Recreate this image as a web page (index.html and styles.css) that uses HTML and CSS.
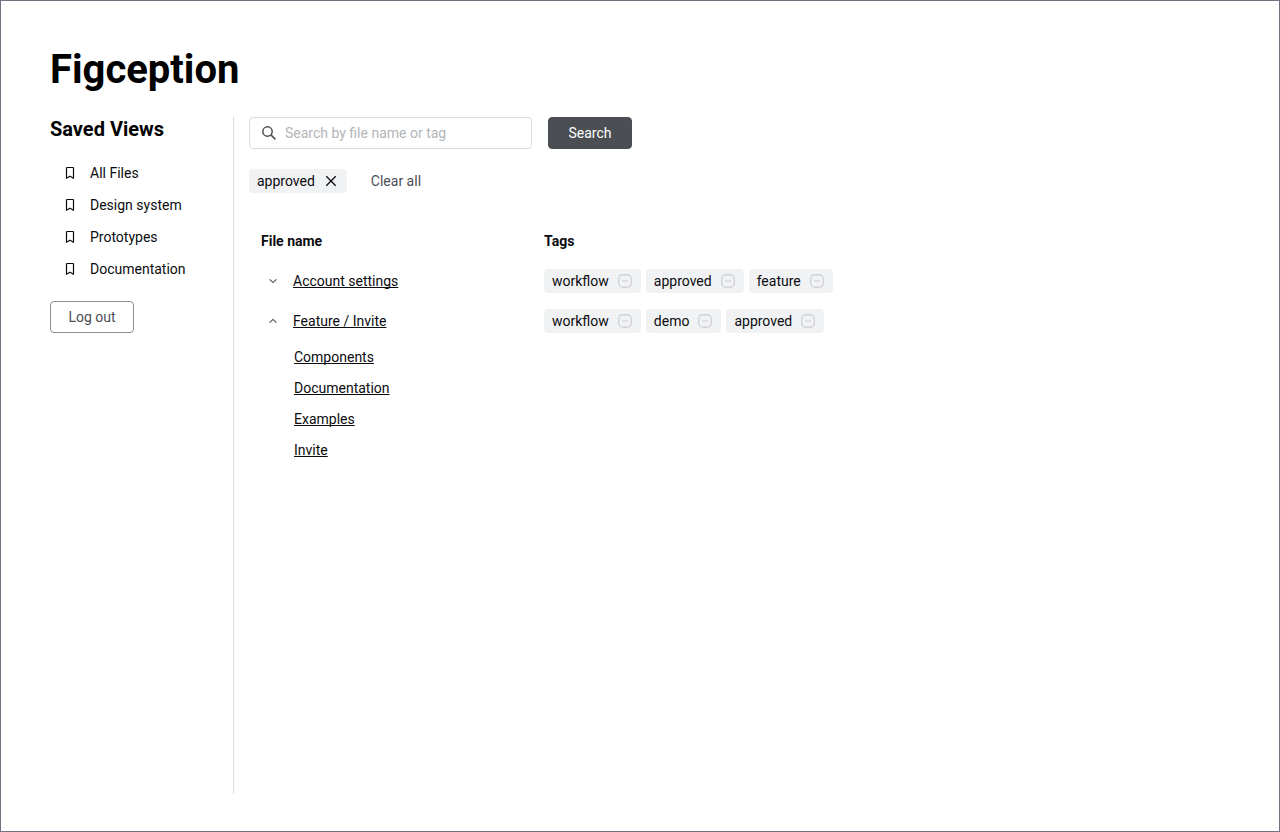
FILE: index.html
```html
<!DOCTYPE html>
<html lang="en">
<head>
  <meta charset="utf-8">
  <meta name="viewport" content="width=device-width, initial-scale=1">
  <title>Figception</title>
  <link rel="stylesheet" href="styles.css">
</head>
<body>
  <svg class="sprite" aria-hidden="true">
    <symbol id="bookmark" viewBox="0 0 16 16">
      <path d="M4.5 3.2q0-.7.7-.7h5.6q.7 0 .7.7v10L8 11.2l-3.5 2z" fill="none" stroke="currentColor" stroke-width="1.2" stroke-linejoin="round"/>
    </symbol>
    <symbol id="remove" viewBox="0 0 16 16">
      <rect x="1.7" y="1.7" width="12.6" height="12.6" rx="4" fill="none" stroke="currentColor" stroke-width="1.4"/>
      <path d="M5 8h6" fill="none" stroke="currentColor" stroke-width="1.2"/>
    </symbol>
  </svg>
  <div class="page">
    <h1 class="title">Figception</h1>
    <div class="layout">
      <aside class="sidebar">
        <h2 class="sidebar-title">Saved Views</h2>
        <nav class="views" aria-label="Saved views">
          <a class="view" href="#all"><svg class="icon"><use href="#bookmark"/></svg>All Files</a>
          <a class="view" href="#design"><svg class="icon"><use href="#bookmark"/></svg>Design system</a>
          <a class="view" href="#prototypes"><svg class="icon"><use href="#bookmark"/></svg>Prototypes</a>
          <a class="view" href="#docs"><svg class="icon"><use href="#bookmark"/></svg>Documentation</a>
        </nav>
        <button class="button" type="button">Log out</button>
      </aside>
      <main class="content">
        <form class="search">
          <label class="search-box">
            <svg class="icon search-icon" viewBox="0 0 16 16" aria-hidden="true">
              <circle cx="6.5" cy="6.5" r="4.7" fill="none" stroke="currentColor" stroke-width="1.5"/>
              <path d="M9.9 9.9l4.5 4.5" fill="none" stroke="currentColor" stroke-width="1.5"/>
            </svg>
            <input class="search-input" type="text" placeholder="Search by file name or tag" aria-label="Search by file name or tag">
          </label>
          <button class="button button-primary" type="submit">Search</button>
        </form>
        <div class="filters">
          <span class="tag">approved
            <button class="tag-button tag-close" type="button" aria-label="Remove approved filter">
              <svg class="icon" viewBox="0 0 16 16"><path d="M3.3 3.3l9.4 9.4M12.7 3.3l-9.4 9.4" fill="none" stroke="currentColor" stroke-width="1.3"/></svg>
            </button>
          </span>
          <button class="clear" type="button">Clear all</button>
        </div>
        <table class="files">
          <thead>
            <tr><th class="name-column" scope="col">File name</th><th scope="col">Tags</th></tr>
          </thead>
          <tbody>
            <tr>
              <td>
                <div class="file">
                  <button class="toggle" type="button" aria-label="Expand Account settings" aria-expanded="false"><svg class="chevron" viewBox="0 0 8 8"><path d="M.6 2.4L4 5.6l3.4-3.2" fill="none" stroke="currentColor" stroke-width="1.1"/></svg></button>
                  <a href="#account">Account settings</a>
                </div>
              </td>
              <td>
                <div class="tags">
                  <span class="tag">workflow <button class="tag-button" type="button" aria-label="Remove workflow"><svg class="icon"><use href="#remove"/></svg></button></span>
                  <span class="tag">approved <button class="tag-button" type="button" aria-label="Remove approved"><svg class="icon"><use href="#remove"/></svg></button></span>
                  <span class="tag">feature <button class="tag-button" type="button" aria-label="Remove feature"><svg class="icon"><use href="#remove"/></svg></button></span>
                </div>
              </td>
            </tr>
            <tr>
              <td>
                <div class="file">
                  <button class="toggle" type="button" aria-label="Collapse Feature / Invite" aria-expanded="true"><svg class="chevron" viewBox="0 0 8 8"><path d="M.6 5.6L4 2.4l3.4 3.2" fill="none" stroke="currentColor" stroke-width="1.1"/></svg></button>
                  <a href="#invite-file">Feature / Invite</a>
                </div>
                <ul class="pages">
                  <li><a href="#components">Components</a></li>
                  <li><a href="#documentation">Documentation</a></li>
                  <li><a href="#examples">Examples</a></li>
                  <li><a href="#invite">Invite</a></li>
                </ul>
              </td>
              <td>
                <div class="tags">
                  <span class="tag">workflow <button class="tag-button" type="button" aria-label="Remove workflow"><svg class="icon"><use href="#remove"/></svg></button></span>
                  <span class="tag">demo <button class="tag-button" type="button" aria-label="Remove demo"><svg class="icon"><use href="#remove"/></svg></button></span>
                  <span class="tag">approved <button class="tag-button" type="button" aria-label="Remove approved"><svg class="icon"><use href="#remove"/></svg></button></span>
                </div>
              </td>
            </tr>
          </tbody>
        </table>
      </main>
    </div>
  </div>
</body>
</html>
```

FILE: styles.css
```css
* { box-sizing: border-box; }

body {
  margin: 0;
  font: 14px/20px Roboto, "Liberation Sans", sans-serif;
  color: #0b0c0f;
  background: #fff;
}

button, input { font: inherit; }
button { cursor: pointer; }
a { color: inherit; }
.sprite { display: none; }
.icon { display: block; flex: none; width: 16px; height: 16px; }

.page {
  display: flex;
  flex-direction: column;
  min-height: 100vh;
  padding: 44px 49px 37px;
  border: 1px solid #6f7480;
}

.title {
  margin: 0 0 22px;
  font-size: 40px;
  line-height: 50px;
  font-weight: 700;
  color: #000;
}

.layout { display: flex; flex: 1; }

.sidebar {
  flex: none;
  width: 184px;
  border-right: 1px solid #dcdcde;
}

.sidebar-title {
  margin: 0 0 16px;
  font-size: 20px;
  line-height: 24px;
  font-weight: 700;
  color: #000;
}

.views { display: flex; flex-direction: column; margin-bottom: 16px; }

.view {
  display: flex;
  align-items: center;
  gap: 12px;
  height: 32px;
  padding-left: 12px;
  text-decoration: none;
}

.button {
  min-width: 84px;
  height: 32px;
  padding: 0 16px;
  border: 1px solid #8b8e93;
  border-radius: 4px;
  background: #fff;
  color: #4b4e54;
}

.button-primary {
  border-color: #4b4e52;
  background: #4b4e52;
  color: #fff;
}

.content { flex: 1; min-width: 0; padding-left: 15px; }

.search { display: flex; gap: 16px; }

.search-box {
  display: flex;
  align-items: center;
  gap: 8px;
  width: 283px;
  height: 32px;
  padding: 0 12px 0 11px;
  border: 1px solid #dcdcde;
  border-radius: 4px;
}

.search-icon { color: #4b4e54; }

.search-input {
  flex: 1;
  min-width: 0;
  padding: 0;
  border: 0;
  outline: 0;
  background: none;
  color: inherit;
}

.search-input::placeholder { color: #b3b5b9; opacity: 1; }

.filters { display: flex; align-items: center; gap: 24px; margin: 20px 0 28px; }

.clear { padding: 0; border: 0; background: none; color: #4b4e54; }

.tag {
  display: inline-flex;
  align-items: center;
  gap: 8px;
  height: 24px;
  padding: 0 8px;
  border-radius: 4px;
  background: #f1f2f4;
}

.tag-button { padding: 0; border: 0; background: none; color: #d2d3d6; }
.tag-close { color: #0b0c0f; }

.files { width: 100%; table-layout: fixed; border-collapse: collapse; }
.files th { height: 40px; padding: 0 12px; text-align: left; font-weight: 700; }
.files td { padding: 0 12px; vertical-align: top; }
.name-column { width: 283px; }

.file { display: flex; align-items: center; gap: 8px; height: 40px; }

.toggle {
  display: grid;
  place-items: center;
  width: 24px;
  height: 24px;
  padding: 0;
  border: 0;
  background: none;
  color: #4b4e54;
}

.chevron { display: block; width: 8px; height: 8px; }

.tags { display: flex; align-items: center; gap: 5px; height: 40px; }

.pages { margin: 0; padding: 1px 0 0 33px; list-style: none; }
.pages li { line-height: 31px; }

.file a, .pages a { text-underline-offset: 1px; text-decoration-skip-ink: none; }
```
